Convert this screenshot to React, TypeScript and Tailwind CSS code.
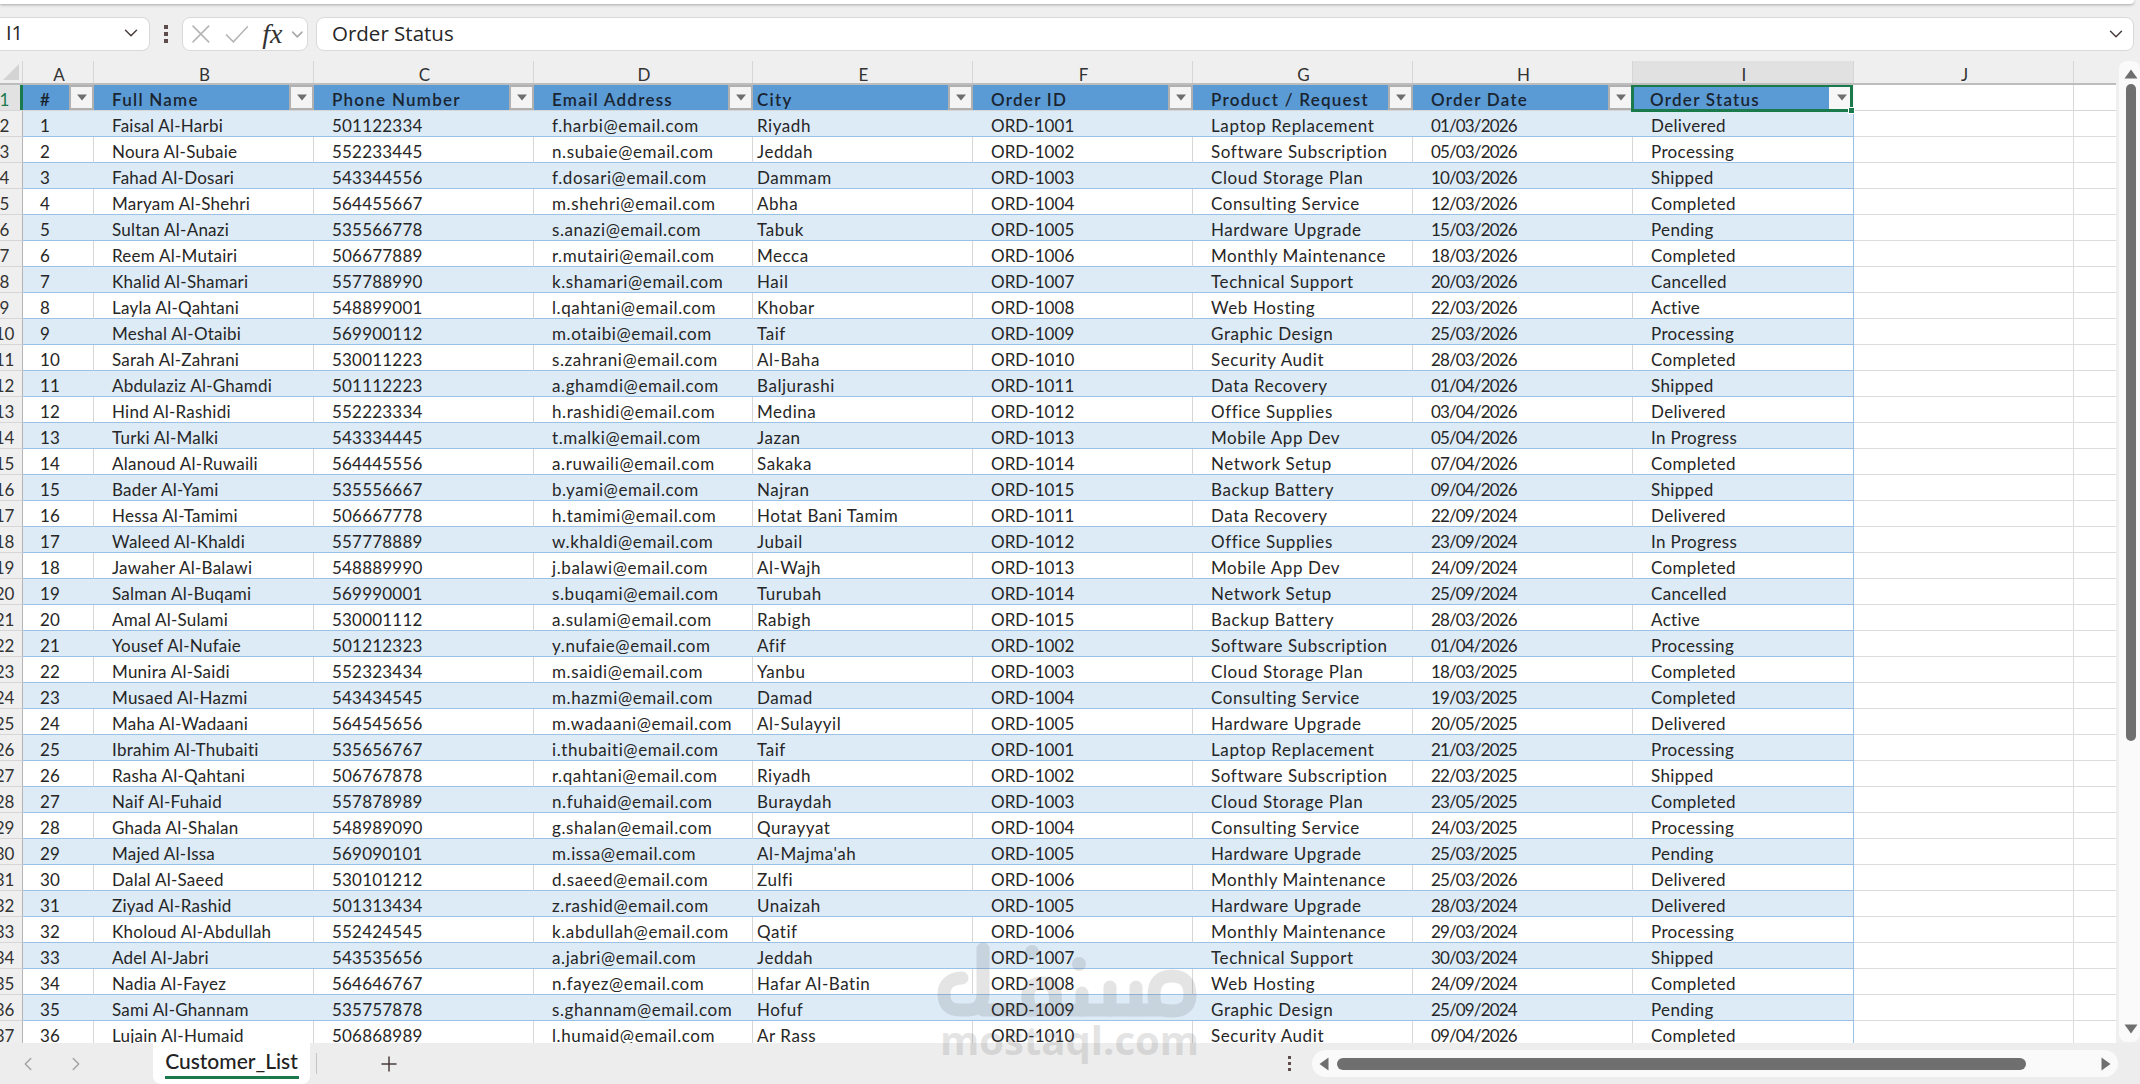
import { ChevronDown, ChevronLeft, ChevronRight, Plus } from "lucide-react";

const rows = `Faisal Al-Harbi|501122334|f.harbi@email.com|Riyadh|ORD-1001|Laptop Replacement|01/03/2026|Delivered
Noura Al-Subaie|552233445|n.subaie@email.com|Jeddah|ORD-1002|Software Subscription|05/03/2026|Processing
Fahad Al-Dosari|543344556|f.dosari@email.com|Dammam|ORD-1003|Cloud Storage Plan|10/03/2026|Shipped
Maryam Al-Shehri|564455667|m.shehri@email.com|Abha|ORD-1004|Consulting Service|12/03/2026|Completed
Sultan Al-Anazi|535566778|s.anazi@email.com|Tabuk|ORD-1005|Hardware Upgrade|15/03/2026|Pending
Reem Al-Mutairi|506677889|r.mutairi@email.com|Mecca|ORD-1006|Monthly Maintenance|18/03/2026|Completed
Khalid Al-Shamari|557788990|k.shamari@email.com|Hail|ORD-1007|Technical Support|20/03/2026|Cancelled
Layla Al-Qahtani|548899001|l.qahtani@email.com|Khobar|ORD-1008|Web Hosting|22/03/2026|Active
Meshal Al-Otaibi|569900112|m.otaibi@email.com|Taif|ORD-1009|Graphic Design|25/03/2026|Processing
Sarah Al-Zahrani|530011223|s.zahrani@email.com|Al-Baha|ORD-1010|Security Audit|28/03/2026|Completed
Abdulaziz Al-Ghamdi|501112223|a.ghamdi@email.com|Baljurashi|ORD-1011|Data Recovery|01/04/2026|Shipped
Hind Al-Rashidi|552223334|h.rashidi@email.com|Medina|ORD-1012|Office Supplies|03/04/2026|Delivered
Turki Al-Malki|543334445|t.malki@email.com|Jazan|ORD-1013|Mobile App Dev|05/04/2026|In Progress
Alanoud Al-Ruwaili|564445556|a.ruwaili@email.com|Sakaka|ORD-1014|Network Setup|07/04/2026|Completed
Bader Al-Yami|535556667|b.yami@email.com|Najran|ORD-1015|Backup Battery|09/04/2026|Shipped
Hessa Al-Tamimi|506667778|h.tamimi@email.com|Hotat Bani Tamim|ORD-1011|Data Recovery|22/09/2024|Delivered
Waleed Al-Khaldi|557778889|w.khaldi@email.com|Jubail|ORD-1012|Office Supplies|23/09/2024|In Progress
Jawaher Al-Balawi|548889990|j.balawi@email.com|Al-Wajh|ORD-1013|Mobile App Dev|24/09/2024|Completed
Salman Al-Buqami|569990001|s.buqami@email.com|Turubah|ORD-1014|Network Setup|25/09/2024|Cancelled
Amal Al-Sulami|530001112|a.sulami@email.com|Rabigh|ORD-1015|Backup Battery|28/03/2026|Active
Yousef Al-Nufaie|501212323|y.nufaie@email.com|Afif|ORD-1002|Software Subscription|01/04/2026|Processing
Munira Al-Saidi|552323434|m.saidi@email.com|Yanbu|ORD-1003|Cloud Storage Plan|18/03/2025|Completed
Musaed Al-Hazmi|543434545|m.hazmi@email.com|Damad|ORD-1004|Consulting Service|19/03/2025|Completed
Maha Al-Wadaani|564545656|m.wadaani@email.com|Al-Sulayyil|ORD-1005|Hardware Upgrade|20/05/2025|Delivered
Ibrahim Al-Thubaiti|535656767|i.thubaiti@email.com|Taif|ORD-1001|Laptop Replacement|21/03/2025|Processing
Rasha Al-Qahtani|506767878|r.qahtani@email.com|Riyadh|ORD-1002|Software Subscription|22/03/2025|Shipped
Naif Al-Fuhaid|557878989|n.fuhaid@email.com|Buraydah|ORD-1003|Cloud Storage Plan|23/05/2025|Completed
Ghada Al-Shalan|548989090|g.shalan@email.com|Qurayyat|ORD-1004|Consulting Service|24/03/2025|Processing
Majed Al-Issa|569090101|m.issa@email.com|Al-Majma'ah|ORD-1005|Hardware Upgrade|25/03/2025|Pending
Dalal Al-Saeed|530101212|d.saeed@email.com|Zulfi|ORD-1006|Monthly Maintenance|25/03/2026|Delivered
Ziyad Al-Rashid|501313434|z.rashid@email.com|Unaizah|ORD-1005|Hardware Upgrade|28/03/2024|Delivered
Kholoud Al-Abdullah|552424545|k.abdullah@email.com|Qatif|ORD-1006|Monthly Maintenance|29/03/2024|Processing
Adel Al-Jabri|543535656|a.jabri@email.com|Jeddah|ORD-1007|Technical Support|30/03/2024|Shipped
Nadia Al-Fayez|564646767|n.fayez@email.com|Hafar Al-Batin|ORD-1008|Web Hosting|24/09/2024|Completed
Sami Al-Ghannam|535757878|s.ghannam@email.com|Hofuf|ORD-1009|Graphic Design|25/09/2024|Pending
Lujain Al-Humaid|506868989|l.humaid@email.com|Ar Rass|ORD-1010|Security Audit|09/04/2026|Completed`
  .split("\n")
  .map((r) => r.split("|"));

const headers = ["#", "Full Name", "Phone Number", "Email Address", "City", "Order ID", "Product / Request", "Order Date", "Order Status"];
const letters = ["A", "B", "C", "D", "E", "F", "G", "H", "I", "J", ""];
const widths = ["w-[71px]", "w-[220px]", "w-[220px]", "w-[219px]", "w-[220px]", "w-[220px]", "w-[220px]", "w-[220px]", "w-[221px]", "w-[220px]", "w-[42px]"];
const tracking = ["tracking-[0.25px]", "tracking-[0.25px]", "tracking-[0.2px]", "tracking-[0.6px]", "tracking-[0.55px]", "tracking-[0.05px]", "tracking-[0.6px]", "tracking-[-0.85px]", "tracking-[0.35px]"];

function FilterButton({ plain = false }: { plain?: boolean }) {
  return (
    <div className={`ml-auto flex h-full w-[25px] shrink-0 items-center justify-center ${plain ? "bg-[#f7f7f7]" : "border-2 border-[#b0b0b0] bg-[#f4f4f4]"}`}>
      <svg width="12" height="7" viewBox="0 0 12 7">
        <polygon points="1,0.5 11,0.5 6,6.5" fill="#6e6e6e" />
      </svg>
    </div>
  );
}

function HeaderRow() {
  return (
    <div className="flex h-[26px] border-b border-[#d6d6d6]">
      <div className="flex w-[23px] shrink-0 items-center overflow-hidden border-r-[3px] border-[#1b7a4b] bg-[#e2e2e2] pt-[5px] text-[17px] text-[#1b7a4b]">
        <span className="flex w-[9px] shrink-0 justify-center">1</span>
      </div>
      {headers.map((h, i) =>
        i === 8 ? (
          <div key={h} className={`${widths[i]} flex shrink-0 items-center`}>
            <span className="flex h-full flex-1 items-center bg-[#5b9bd5] pl-[17px] pt-[4px] text-[17px] font-semibold tracking-[1.25px] text-[#1a2430]">
              {h}
            </span>
            <FilterButton plain />
          </div>
        ) : (
          <div key={h} className={`${widths[i]} flex shrink-0 items-center bg-[#5b9bd5] ${i === 4 ? "pl-[4px]" : i === 0 ? "pl-[17px]" : "pl-[18px]"} text-[17px] font-semibold tracking-[1.25px] text-[#1a2430]`}>
            <span className="pt-[4px]">{h}</span>
            <FilterButton />
          </div>
        ),
      )}
      <div className="w-[220px] shrink-0 border-r border-[#d6d6d6] bg-white" />
      <div className="w-[42px] shrink-0 bg-white" />
    </div>
  );
}

function DataRow({ row, index }: { row: string[]; index: number }) {
  const banded = index % 2 === 0;
  const cells = [String(index + 1), ...row];
  return (
    <div className="flex h-[26px] shrink-0">
      <div className="flex w-[23px] shrink-0 items-center overflow-hidden border-r border-b border-r-[#b4b4b4] border-b-[#d6d6d6] bg-[#efefef] pt-[5px] text-[17px] text-[#333333]">
        <span className="flex w-[9px] shrink-0 justify-center whitespace-nowrap">{index + 2}</span>
      </div>
      {cells.map((c, i) => (
        <div
          key={i}
          className={`${widths[i]} flex shrink-0 items-center whitespace-nowrap border-b border-b-[#9bc2e6] pt-[5px] text-[17px] ${tracking[i]} text-[#262626] ${banded ? "bg-[#ddebf7]" : "bg-white"} ${i === 8 ? "border-r border-r-[#9bc2e6]" : banded ? "" : "border-r border-r-[#d6d6d6]"} ${i === 4 ? "pl-[4px]" : i === 0 ? "pl-[17px]" : "pl-[18px]"}`}
        >
          {c}
        </div>
      ))}
      <div className="w-[220px] shrink-0 border-r border-b border-[#dcdcdc] bg-white" />
      <div className="w-[42px] shrink-0 border-b border-[#dcdcdc] bg-white" />
    </div>
  );
}

function FormulaBar() {
  return (
    <div className="mt-[13px] flex h-[34px] shrink-0 items-stretch pr-[6px] font-['Open_Sans',sans-serif] text-[#262626]">
      <div className="flex w-[150px] items-center justify-between rounded-r-lg border border-l-0 border-[#d9d9d9] bg-white pl-[6px] pr-[7px] pb-[2px] text-[20px]">
        I1
        <ChevronDown size={22} strokeWidth={1.6} className="text-[#4a3c3c]" />
      </div>
      <div className="flex w-[32px] flex-col items-center justify-center gap-[3px]">
        <span className="h-[4px] w-[4px] bg-[#5e4b4b]" />
        <span className="h-[4px] w-[4px] bg-[#5e4b4b]" />
        <span className="h-[4px] w-[4px] bg-[#5e4b4b]" />
      </div>
      <div className="flex w-[126px] items-center rounded-lg border border-[#d9d9d9] bg-white pl-[9px]">
        <svg width="18" height="18" viewBox="0 0 18 18" stroke="#b4b4b4" strokeWidth="1.6" fill="none">
          <path d="M0.5 0.5 L17.5 17.5 M17.5 0.5 L0.5 17.5" />
        </svg>
        <svg className="ml-[15px]" width="24" height="18" viewBox="0 0 24 18" stroke="#b4b4b4" strokeWidth="1.6" fill="none">
          <path d="M1 9.5 L8.5 17 L23.5 1" />
        </svg>
        <span className="ml-[14px] font-['Liberation_Serif',serif] text-[28px] italic leading-none text-[#333333]">fx</span>
        <ChevronDown size={19} strokeWidth={2} className="ml-[6px] text-[#a8a8a8]" />
      </div>
      <div className="ml-[8px] flex flex-1 items-center justify-between rounded-lg border border-[#d9d9d9] bg-white pl-[15px] pr-[6px] text-[20.5px]">
        <span className="pb-[2px]">Order Status</span>
        <ChevronDown size={22} strokeWidth={1.6} className="text-[#4a3c3c]" />
      </div>
    </div>
  );
}

function ColumnHeader() {
  return (
    <div className="flex h-[24px] shrink-0 border-b-2 border-[#bdbdbd] text-[17px] text-[#333333]">
      <div className="flex w-[23px] shrink-0 items-end justify-end border-r border-[#d6d6d6] pb-[2px] pr-[2px]">
        <svg width="18" height="17" viewBox="0 0 18 17">
          <polygon points="17,0 17,16 1,16" fill="#d4d4d4" />
        </svg>
      </div>
      {letters.map((l, i) => (
        <div
          key={i}
          className={`${widths[i]} flex shrink-0 items-center justify-center pl-[2px] pt-[5px] ${i === 10 ? "" : "border-r border-[#d6d6d6]"} ${l === "I" ? "bg-[#e1e1e1]" : ""}`}
        >
          {l}
        </div>
      ))}
    </div>
  );
}

function VerticalScrollbar() {
  return (
    <div className="flex w-[24px] shrink-0 flex-col items-center pb-[1px] pl-[3px]">
      <div className="flex h-full w-[21px] flex-col items-center rounded-lg bg-[#fafafa] py-[8px] pl-[2px]">
        <svg className="shrink-0" width="14" height="10" viewBox="0 0 14 10">
          <polygon points="7,0.5 13.5,9.5 0.5,9.5" fill="#6f6f6f" />
        </svg>
        <div className="mt-[5px] h-[657px] w-[10px] shrink-0 rounded-full bg-[#6f6f6f]" />
        <svg className="mt-auto shrink-0" width="14" height="10" viewBox="0 0 14 10">
          <polygon points="0.5,0.5 13.5,0.5 7,9.5" fill="#6f6f6f" />
        </svg>
      </div>
    </div>
  );
}

function TabBar() {
  return (
    <div className="flex h-[41px] shrink-0 items-stretch bg-[#ededed] text-[#333333]">
      <div className="flex w-[153px] items-center rounded-tr-lg pl-[17px]">
        <ChevronLeft size={22} strokeWidth={1.6} className="text-[#a3a3a3]" />
        <ChevronRight size={22} strokeWidth={1.6} className="ml-[26px] text-[#a3a3a3]" />
      </div>
      <div className="flex w-[157px] flex-col items-center rounded-b-lg bg-white pt-[3px]">
        <span className="text-[21px] font-medium leading-[30px] text-[#222222]">Customer_List</span>
        <span className="h-[3px] w-[134px] bg-[#1b7a4b]" />
      </div>
      <div className="mx-[6px] my-[10px] w-px bg-[#c4c4c4]" />
      <div className="flex w-[131px] items-center justify-center">
        <Plus size={24} strokeWidth={1.5} className="text-[#4a3c3c]" />
      </div>
      <div className="ml-auto flex items-center">
        <div className="mr-[21px] flex flex-col gap-[3px]">
          <span className="h-[3px] w-[3px] bg-[#5e4b4b]" />
          <span className="h-[3px] w-[3px] bg-[#5e4b4b]" />
          <span className="h-[3px] w-[3px] bg-[#5e4b4b]" />
        </div>
        <div className="mr-[22px] flex h-[27px] w-[806px] items-center rounded-full bg-[#fafafa] px-[7px]">
          <svg width="10" height="14" viewBox="0 0 10 14">
            <polygon points="0.5,7 9.5,0.5 9.5,13.5" fill="#6f6f6f" />
          </svg>
          <div className="ml-[8px] h-[12px] w-[689px] rounded-full bg-[#6f6f6f]" />
          <svg className="ml-auto" width="10" height="14" viewBox="0 0 10 14">
            <polygon points="9.5,7 0.5,0.5 0.5,13.5" fill="#6f6f6f" />
          </svg>
        </div>
      </div>
    </div>
  );
}

function Watermark() {
  return (
    <div className="pointer-events-none absolute left-[930px] top-[935px] h-[130px] w-[280px] opacity-[0.14]">
      <svg width="280" height="90" viewBox="0 0 280 90" fill="none" stroke="#4a4a4a" strokeWidth="13" strokeLinecap="round" strokeLinejoin="round">
        <path d="M53 14 V58 Q53 75 38 75 H30 Q14 75 14 59 Q14 44 32 43" />
        <path d="M53 75 H232 M232 75 Q260 80 260 60 Q260 41 242 41 Q224 41 224 60 Q224 75 232 75" />
        <path d="M100 75 Q92 48 112 48 Q130 48 124 75" />
        <path d="M152 75 V58 M180 75 V52 M206 75 V52" />
        <circle cx="102" cy="17" r="7" fill="#4a4a4a" stroke="none" />
        <circle cx="149" cy="29" r="7" fill="#4a4a4a" stroke="none" />
      </svg>
      <div className="mt-[-8px] pl-[10px] font-['Open_Sans',sans-serif] text-[40px] font-bold leading-[46px] text-[#4a4a4a]">
        mostaql.com
      </div>
    </div>
  );
}

export default function App() {
  return (
    <div className="relative flex h-[1084px] w-[2140px] flex-col overflow-hidden bg-[#efefef] font-['Lato',sans-serif]">
      <div className="mr-[6px] h-[4px] shrink-0 rounded-br-lg bg-white shadow-[0_1px_3px_rgba(0,0,0,0.3)]" />
      <FormulaBar />
      <div className="mt-[10px] flex min-h-0 flex-1">
        <div className="flex w-[2116px] shrink-0 flex-col overflow-hidden">
          <ColumnHeader />
          <div className="relative min-h-0 flex-1 overflow-hidden">
            <HeaderRow />
            {rows.map((r, i) => (
              <DataRow key={i} row={r} index={i} />
            ))}
            {/* active cell box */}
            <div className="pointer-events-none absolute left-[1631px] top-[-1px] h-[28px] w-[222px] border-[3px] border-[#1b7a4b]">
              <span className="absolute right-[-5px] bottom-[-5px] h-[7px] w-[7px] border border-white bg-[#1b7a4b]" />
            </div>
          </div>
        </div>
        <VerticalScrollbar />
      </div>
      <TabBar />
      <Watermark />
    </div>
  );
}
